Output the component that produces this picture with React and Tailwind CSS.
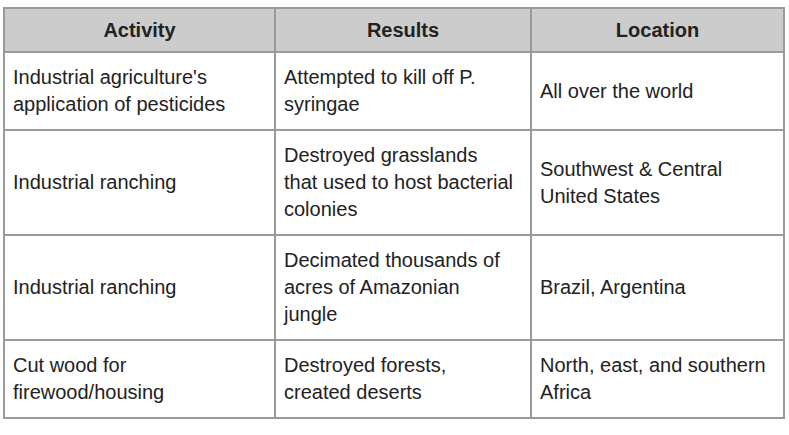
// each cell is listed line by line so the wrapping matches the original table
const rows = [
  [["Industrial agriculture's", "application of pesticides"], ["Attempted to kill off P.", "syringae"], ["All over the world"]],
  [["Industrial ranching"], ["Destroyed grasslands", "that used to host bacterial", "colonies"], ["Southwest & Central", "United States"]],
  [["Industrial ranching"], ["Decimated thousands of", "acres of Amazonian", "jungle"], ["Brazil, Argentina"]],
  [["Cut wood for", "firewood/housing"], ["Destroyed forests,", "created deserts"], ["North, east, and southern", "Africa"]],
];

export default function App() {
  return (
    <div className="w-[789px] h-[435px] bg-white pt-[7px] pl-[3px] font-['Liberation_Sans',Arial,sans-serif] text-[20px] text-[#222]">
      <table className="border-collapse table-fixed w-[780px] border-2 border-[#9a9a9a]">
        <colgroup>
          <col className="w-[271px]" />
          <col className="w-[256px]" />
          <col className="w-[253px]" />
        </colgroup>
        <thead>
          <tr className="bg-[#cccccc]">
            <th className="border-2 border-[#9a9a9a] h-[44px] font-bold text-center leading-[20px]">Activity</th>
            <th className="border-2 border-[#9a9a9a] font-bold text-center leading-[20px]">Results</th>
            <th className="border-2 border-[#9a9a9a] font-bold text-center leading-[20px]">Location</th>
          </tr>
        </thead>
        <tbody>
          {rows.map((r, i) => (
            <tr key={i}>
              {r.map((lines, j) => (
                <td key={j} className="border-2 border-[#9a9a9a] px-[8px] py-[11px] leading-[27px] align-middle whitespace-nowrap">
                  {lines.map((l, k) => (
                    <div key={k}>{l}</div>
                  ))}
                </td>
              ))}
            </tr>
          ))}
        </tbody>
      </table>
    </div>
  );
}
